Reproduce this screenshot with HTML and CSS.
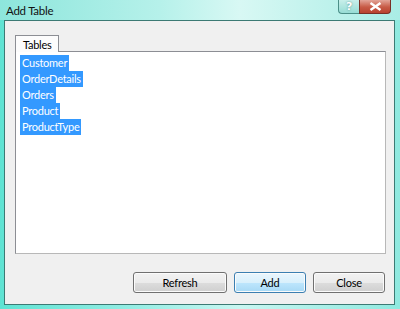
FILE: index.html
```html
<!DOCTYPE html>
<html lang="en">
<head>
  <meta charset="UTF-8">
  <title>Add Table</title>
  <link rel="stylesheet" href="styles.css">
</head>
<body>
  <div class="window">
    <div class="titlebar">
      <span class="title">Add Table</span>
      <div class="caption-buttons">
        <div class="cap-btn help">?</div>
        <div class="cap-btn close">
          <svg width="13" height="9" viewBox="0 0 13 9"><path d="M1.5 1 L11.5 8 M11.5 1 L1.5 8" stroke="#fff" stroke-width="2.4"/></svg>
        </div>
      </div>
    </div>

    <div class="client">
      <div class="tabs">
        <div class="tab active">Tables</div>
      </div>
      <div class="listbox">
        <div class="item"><span>Customer</span></div>
        <div class="item"><span>OrderDetails</span></div>
        <div class="item"><span>Orders</span></div>
        <div class="item"><span>Product</span></div>
        <div class="item"><span>ProductType</span></div>
      </div>
      <div class="buttons">
        <button class="btn refresh">Refresh</button>
        <button class="btn default">Add</button>
        <button class="btn">Close</button>
      </div>
    </div>
  </div>
</body>
</html>
```

FILE: styles.css
```css
body {
  margin: 0;
  font-family: Lato, "Open Sans", sans-serif;
  font-size: 11px;
  letter-spacing: -0.25px;
  color: #000;
}
.window {
  width: 400px;
  height: 309px;
  display: flex;
  flex-direction: column;
  background: linear-gradient(90deg, #5fe3d3 0%, #8fece2 30%, #c9f6f1 60%, #8fe9df 100%);
  box-sizing: border-box;
}
.titlebar {
  height: 20px;
  display: flex;
  align-items: flex-start;
  background: linear-gradient(90deg, #8de6dc 0%, #b6f1ea 40%, #d8f8f4 60%, #a9ede5 100%);
}
.title {
  padding: 4px 0 0 6px;
  font-size: 11.5px;
  color: #111;
}
.caption-buttons {
  margin-left: auto;
  margin-right: 9px;
  display: flex;
}
.cap-btn {
  height: 14px;
  display: flex;
  align-items: center;
  justify-content: center;
  border: 1px solid #4b8f88;
  border-top: none;
  box-sizing: border-box;
}
.help {
  width: 21px;
  border-radius: 0 0 0 4px;
  border-right: none;
  background: linear-gradient(#c8efea, #97ddd5);
  color: #fff;
  font-family: "DejaVu Sans", sans-serif;
  font-weight: bold;
  font-size: 11px;
  text-shadow: 0 0 2px #4a8d87;
}
.close {
  width: 32px;
  border-radius: 0 0 4px 0;
  border-color: #7a3026;
  background: linear-gradient(#e3a598, #c75a45 55%, #b84330);
}
.client {
  flex: 1;
  margin: 0 5px 4px 4px;
  border: 1px solid #3c7a74;
  background: #f0f0f0;
  padding: 14px 8px 11px 10px;
  display: flex;
  flex-direction: column;
}
.tabs {
  display: flex;
  height: 16px;
  position: relative;
  z-index: 1;
}
.tab {
  width: 44px;
  box-sizing: border-box;
  border: 1px solid #8c8e94;
  border-bottom: none;
  background: #fcfcfc;
  padding: 2px 0 0 7px;
  height: 17px;
}
.listbox {
  height: 203px;
  box-sizing: border-box;
  border: 1px solid #8c8e94;
  border-right-color: #b8b8b8;
  border-bottom-color: #b8b8b8;
  background: #fff;
  padding: 3px 4px;
}
.item {
  height: 16px;
}
.item span {
  display: inline-block;
  height: 16px;
  line-height: 16px;
  padding: 0 2px;
  background: #3399ff;
  color: #fff;
}
.buttons {
  margin-top: auto;
  display: flex;
  justify-content: flex-end;
  gap: 7px;
  margin-right: 1px;
}
.btn {
  width: 72px;
  height: 21px;
  font-family: inherit;
  font-size: 11px;
  letter-spacing: -0.25px;
  color: #000;
  border: 1px solid #707070;
  border-radius: 3px;
  background: linear-gradient(#f2f2f2 0%, #ebebeb 50%, #dddddd 50%, #cfcfcf 100%);
  box-shadow: inset 0 0 0 1px #fbfbfb;
  padding: 0;
}
.refresh {
  width: 94px;
}
.default {
  border-color: #3c7fb1;
  background: linear-gradient(#eaf6fd 0%, #d9f0fc 50%, #bee6fd 50%, #a7d9f5 100%);
}
```
